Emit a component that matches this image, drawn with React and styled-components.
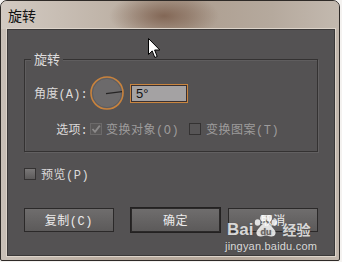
import React from "react";
import styled, { createGlobalStyle } from "styled-components";

const GlobalStyle = createGlobalStyle`
  html, body {
    margin: 0;
    padding: 0;
    background: #f4f2f0;
  }
  body {
    font-family: "Liberation Mono", "Noto Sans CJK SC", monospace;
  }
`;

const Window = styled.div`
  position: relative;
  box-sizing: border-box;
  width: 340px;
  height: 261px;
  border: 1px solid #2e2a27;
  border-radius: 7px 7px 2px 2px;
  overflow: hidden;
  display: flex;
  flex-direction: column;
  background:
    linear-gradient(90deg, #c9c0b7 0%, #b9ab9e 30%, #b4a699 70%, #c2b7ad 100%);
`;

const TitleBar = styled.div`
  height: 28px;
  flex: none;
  display: flex;
  align-items: center;
  padding-left: 7px;
  font-family: "Noto Sans CJK SC", sans-serif;
  font-size: 14px;
  color: #111;
  background:
    radial-gradient(ellipse 55px 24px at 163px 15px, rgba(122, 92, 74, 0.85), rgba(122, 92, 74, 0) 100%),
    linear-gradient(90deg, #d2cac2 0%, #bdb1a5 35%, #ad9e90 55%, #b5a99d 80%, #c3b9af 100%);
`;

const Panel = styled.div`
  flex: 1;
  margin: 0 4px 4px 6px;
  border: 1px solid #3b3939;
  box-shadow: 0 0 0 1px #ddd4ca;
  background: #545253;
  padding: 0 16px;
  display: flex;
  flex-direction: column;
`;

const Group = styled.div`
  margin-top: 29px;
  border: 1px solid #343232;
  box-shadow: 1px 1px 0 #626061, inset 1px 1px 0 #5f5d5e;
  display: flex;
  flex-direction: column;
  padding-bottom: 13px;
`;

const Legend = styled.span`
  align-self: flex-start;
  margin: -8px 0 0 6px;
  padding: 0 3px;
  line-height: 14px;
  font-family: "Noto Sans CJK SC", sans-serif;
  font-size: 13px;
  color: #dedcdc;
  background: #545253;
`;

const FormGrid = styled.div`
  display: grid;
  grid-template-columns: 63px auto;
  column-gap: 2px;
  row-gap: 10px;
  margin-top: 10px;
  align-items: center;
`;

const Label = styled.span`
  justify-self: end;
  font-size: 12px;
  color: #dcdada;
  letter-spacing: 0.2px;
  white-space: nowrap;
`;

const Controls = styled.div`
  display: flex;
  align-items: center;
  gap: ${(p) => p.gap || 0}px;
`;

const AngleInput = styled.div`
  box-sizing: border-box;
  width: 58px;
  height: 19px;
  border: 1px solid #c9853f;
  box-shadow: inset 0 0 0 1px #3a3030;
  background: #a4a2a3;
  color: #111;
  font-family: "Liberation Sans", sans-serif;
  font-size: 13px;
  line-height: 17px;
  padding-left: 5px;
`;

const Check = styled.span`
  box-sizing: border-box;
  width: 12px;
  height: 12px;
  flex: none;
  display: flex;
  align-items: center;
  justify-content: center;
  border: 1px solid ${(p) => (p.disabled ? "#6c6a6a" : "#343232")};
  background: ${(p) =>
    p.disabled
      ? "#5a5858"
      : p.raised
      ? "linear-gradient(#7a7878, #5c5a5a)"
      : "#575556"};
`;

const CheckText = styled.span`
  font-size: 12px;
  letter-spacing: 0.5px;
  color: ${(p) => (p.dim ? "#9d9b9b" : "#dcdada")};
  margin-left: ${(p) => p.before || 4}px;
  margin-right: ${(p) => p.after || 0}px;
  white-space: nowrap;
`;

const PreviewRow = styled.div`
  display: flex;
  align-items: center;
  margin-top: 13px;
`;

const ButtonRow = styled.div`
  display: flex;
  margin-top: 25px;
`;

const Button = styled.div`
  box-sizing: border-box;
  width: 90px;
  height: 24px;
  margin-left: ${(p) => p.gap || 0}px;
  display: flex;
  align-items: center;
  justify-content: center;
  border: 1px solid #2b2929;
  box-shadow: ${(p) => (p.primary ? "0 0 0 1px #232121" : "none")};
  background: linear-gradient(#6f6d6d, #5c5a5a);
  color: #ecebeb;
  font-size: 12px;
  letter-spacing: 0.5px;
`;

const Cursor = styled.svg`
  position: absolute;
  left: 147px;
  top: 37px;
`;

const Watermark = styled.div`
  position: absolute;
  left: 224px;
  top: 213px;
  display: flex;
  flex-direction: column;
  color: rgba(255, 255, 255, 0.8);
  text-shadow: 0 0 1px rgba(60, 60, 60, 0.6);
  font-family: "Liberation Sans", Arial, sans-serif;
`;

const Brand = styled.div`
  display: flex;
  align-items: flex-end;
  height: 23px;
`;

const BrandBai = styled.span`
  font-size: 17px;
  font-weight: bold;
  line-height: 15px;
  margin-left: 2px;
`;

const BrandJing = styled.span`
  font-family: "Noto Sans CJK SC", sans-serif;
  font-size: 14px;
  font-weight: bold;
  line-height: 16px;
  margin-left: 3px;
`;

const Domain = styled.span`
  font-size: 11px;
  line-height: 12px;
  margin-top: 3px;
  letter-spacing: 0.2px;
`;

function Dial() {
  return (
    <svg width="34" height="34" viewBox="0 0 34 34">
      <circle cx="17" cy="17" r="16" fill="#6c6a6b" stroke="#c8823c" strokeWidth="1.6" />
      <circle cx="17" cy="17" r="14.6" fill="none" stroke="#5a5859" strokeWidth="0.8" />
      <line x1="16" y1="17.6" x2="32" y2="15.6" stroke="#262424" strokeWidth="1.4" />
    </svg>
  );
}

function Tick({ color }) {
  return (
    <svg width="10" height="10" viewBox="0 0 10 10">
      <path d="M1.5 5 L4 7.8 L8.8 1.6" fill="none" stroke={color} strokeWidth="1.8" />
    </svg>
  );
}

function Paw() {
  return (
    <svg width="26" height="22" viewBox="0 0 26 22">
      <g fill="rgba(255,255,255,0.82)">
        <ellipse cx="4.6" cy="7.5" rx="2.8" ry="3.2" />
        <ellipse cx="10" cy="3.2" rx="2.8" ry="3.2" />
        <ellipse cx="16" cy="3.2" rx="2.8" ry="3.2" />
        <ellipse cx="21.4" cy="7.5" rx="2.8" ry="3.2" />
        <path d="M13 8 C9 8 7 12 4.5 15 C2 18 4 22 8 21.5 C10 21.3 11.5 20.6 13 20.6 C14.5 20.6 16 21.3 18 21.5 C22 22 24 18 21.5 15 C19 12 17 8 13 8 Z" />
      </g>
      <text
        x="13"
        y="19.5"
        textAnchor="middle"
        fontSize="9"
        fontWeight="bold"
        fontFamily="Liberation Sans, Arial, sans-serif"
        fill="#6a6262"
      >
        du
      </text>
    </svg>
  );
}

export default function App() {
  return (
    <>
      <GlobalStyle />
      <Window>
        <TitleBar>旋转</TitleBar>
        <Panel>
          <Group>
            <Legend>旋转</Legend>
            <FormGrid>
              <Label>角度(A):</Label>
              <Controls gap={6}>
                <Dial />
                <AngleInput>5°</AngleInput>
              </Controls>
              <Label>选项:</Label>
              <Controls>
                <Check disabled>
                  <Tick color="#8c8a8a" />
                </Check>
                <CheckText dim after={10}>变换对象(O)</CheckText>
                <Check />
                <CheckText dim before={5}>变换图案(T)</CheckText>
              </Controls>
            </FormGrid>
          </Group>
          <PreviewRow>
            <Check raised />
            <CheckText before={5}>预览(P)</CheckText>
          </PreviewRow>
          <ButtonRow>
            <Button>复制(C)</Button>
            <Button primary gap={17}>确定</Button>
            <Button gap={8}>取消</Button>
          </ButtonRow>
        </Panel>
        <Cursor width="13" height="21" viewBox="0 0 13 21">
          <path
            d="M0.5 0.5 L0.5 16.5 L4.2 12.9 L6.8 19.5 L9.2 18.5 L6.6 12 L11.8 12 Z"
            fill="#fff"
            stroke="#000"
            strokeWidth="1"
            strokeLinejoin="miter"
          />
        </Cursor>
        <Watermark>
          <Brand>
            <BrandBai>Bai</BrandBai>
            <Paw />
            <BrandJing>经验</BrandJing>
          </Brand>
          <Domain>jingyan.baidu.com</Domain>
        </Watermark>
      </Window>
    </>
  );
}
